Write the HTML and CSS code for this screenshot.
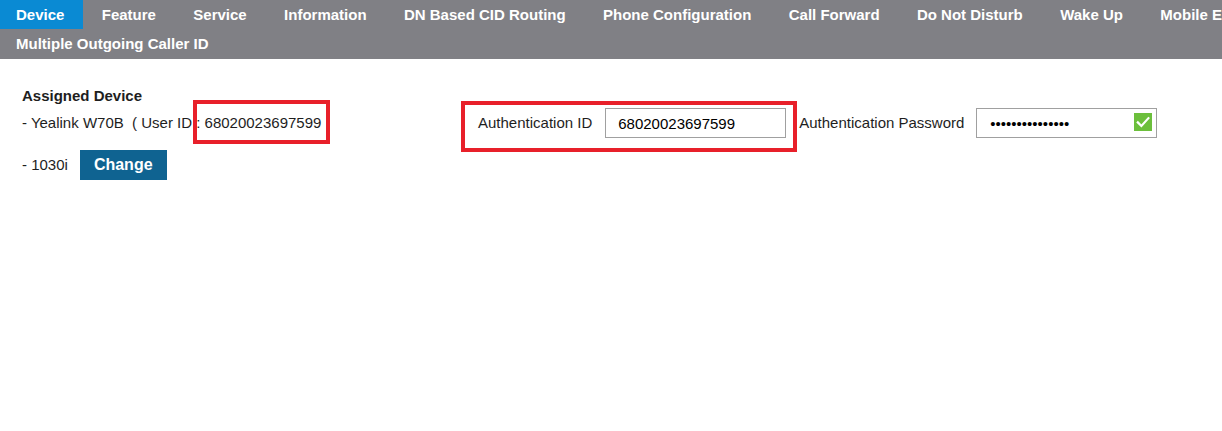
FILE: index.html
```html
<!DOCTYPE html>
<html lang="en">
<head>
<meta charset="utf-8">
<title>Device</title>
<link rel="stylesheet" href="styles.css">
</head>
<body>
<nav class="tabs">
  <ul class="tab-row">
    <li class="tab active">Device</li>
    <li class="tab">Feature</li>
    <li class="tab">Service</li>
    <li class="tab">Information</li>
    <li class="tab">DN Based CID Routing</li>
    <li class="tab">Phone Configuration</li>
    <li class="tab">Call Forward</li>
    <li class="tab">Do Not Disturb</li>
    <li class="tab">Wake Up</li>
    <li class="tab">Mobile Extension</li>
  </ul>
  <ul class="tab-row tab-row-second">
    <li class="tab">Multiple Outgoing Caller ID</li>
  </ul>
</nav>

<main class="content">
  <section class="device">
    <div class="device-title">Assigned Device</div>
    <div class="device-line">- Yealink W70B &nbsp;( User ID : 68020023697599</div>
    <div class="device-row">
      <span>- 1030i</span>
      <button class="btn-change" type="button">Change</button>
    </div>
  </section>

  <section class="auth">
    <label class="auth-label">Authentication ID</label>
    <input class="auth-input" type="text" value="68020023697599">
    <label class="auth-label">Authentication Password</label>
    <span class="pw-wrap">
      <input class="auth-input" type="password" value="123456789012345">
      <svg class="pw-check" width="18" height="18" viewBox="0 0 18 18" aria-hidden="true">
        <rect x="0" y="0" width="18" height="18" fill="#6cbf3c"/>
        <path d="M3.8 9.4 L7.4 13 L14.4 5.2" fill="none" stroke="#ffffff" stroke-width="2.2" stroke-linecap="square"/>
      </svg>
    </span>
  </section>

  <div class="mark mark-userid"></div>
  <div class="mark mark-authid"></div>
</main>
</body>
</html>
```

FILE: styles.css
```css
html, body {
  margin: 0;
  padding: 0;
  overflow: hidden;
  background: #ffffff;
}

body {
  font-family: "Liberation Sans", Arial, sans-serif;
  font-size: 15px;
  color: #1e1e1e;
}

.tabs {
  background: #808085;
  padding-bottom: 1px;
}

.tab-row {
  display: flex;
  margin: 0;
  padding: 0;
  list-style: none;
  white-space: nowrap;
  overflow: hidden;
  height: 29px;
}

.tab {
  flex: none;
  padding: 0 18.7px;
  line-height: 29px;
  color: #ffffff;
  font-weight: bold;
  font-size: 15px;
}

.tab:first-child {
  padding-left: 16px;
}

.tab.active {
  background: #0a8ad3;
}

.content {
  position: relative;
  display: flex;
  align-items: flex-start;
  padding: 27px 22px 0;
  line-height: 20px;
}

.device {
  width: 456px;
  flex: none;
}

.device-title {
  font-weight: bold;
}

.device-line {
  margin-top: 7px;
}

.device-row {
  display: flex;
  align-items: center;
  gap: 12px;
  margin-top: 17px;
}

.btn-change {
  height: 30px;
  padding: 0 14px;
  border: none;
  background: #0f6391;
  color: #ffffff;
  font-family: "Liberation Sans", Arial, sans-serif;
  font-size: 16px;
  font-weight: bold;
  cursor: pointer;
}

.auth {
  display: flex;
  align-items: center;
  gap: 13px;
  margin-top: 22px;
}

.auth-input {
  box-sizing: border-box;
  width: 181px;
  height: 30px;
  padding: 0 12px;
  border: 1px solid #a0a0a0;
  border-radius: 0;
  font-family: "Liberation Sans", Arial, sans-serif;
  font-size: 15px;
  color: #000000;
  background: #ffffff;
  outline: none;
}

.pw-wrap {
  position: relative;
  display: inline-block;
  height: 30px;
  margin-left: -1px;
}

.pw-wrap .auth-input {
  padding-left: 13px;
}

.pw-check {
  position: absolute;
  top: 5px;
  right: 5px;
}

.mark {
  position: absolute;
  box-sizing: border-box;
  border: 4px solid #e8202a;
  pointer-events: none;
}

.mark-userid {
  left: 193px;
  top: 41px;
  width: 137px;
  height: 44px;
}

.mark-authid {
  left: 461px;
  top: 42px;
  width: 336px;
  height: 51px;
}
```
